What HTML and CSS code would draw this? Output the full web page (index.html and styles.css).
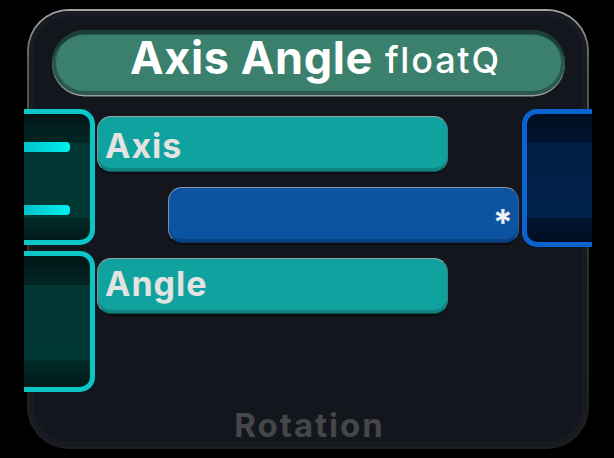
FILE: index.html
```html
<!DOCTYPE html>
<html>
<head>
<meta charset="utf-8">
<link rel="stylesheet" href="styles.css">
</head>
<body>
<div class="node">
  <div class="node-inner">
    <div class="title">
      <span class="name">Axis Angle</span>
      <span class="type">floatQ</span>
    </div>
    <div class="rows">
      <div class="field teal">Axis</div>
      <div class="field blue">*</div>
      <div class="field teal high">Angle</div>
    </div>
    <div class="footer">Rotation</div>
  </div>
  <div class="socket in s1">
    <span class="bar"></span>
    <span class="bar"></span>
  </div>
  <div class="socket in s2"></div>
  <div class="socket out s3"></div>
</div>
</body>
</html>
```

FILE: styles.css
```css
html, body {
  margin: 0;
  background: #000;
}
body {
  width: 614px;
  height: 458px;
  overflow: hidden;
  padding: 9px 0 0 27px;
  box-sizing: border-box;
  font-family: Inter, "Noto Sans", sans-serif;
}
.node {
  position: relative;
  width: 562px;
  height: 440px;
  box-sizing: border-box;
  padding: 2px;
  border-radius: 42px;
  background: linear-gradient(to bottom, #a6a6a6 0%, #5a5a5a 12%, #2c2c2c 60%, #202020 100%);
}
.node-inner {
  height: 100%;
  box-sizing: border-box;
  border-radius: 40px;
  background: #13161d;
  box-shadow: inset 0 0 0 5px #181b21;
  padding: 19px 22px 0 23px;
  display: flex;
  flex-direction: column;
}
.title {
  height: 65px;
  box-sizing: border-box;
  border-radius: 33px;
  background: #3a806d;
  box-shadow: inset 0 5px 0 rgba(0, 0, 0, 0.3), inset 0 0 0 4px rgba(0, 0, 0, 0.3), 0 1.5px 0 #9a9d9d;
  display: flex;
  align-items: center;
  justify-content: center;
  gap: 12px;
  padding: 0 0 10px 14px;
  color: #fff;
}
.name {
  font-size: 45px;
  font-weight: 700;
  letter-spacing: 0.6px;
  line-height: 1;
}
.type {
  font-size: 36px;
  font-weight: 500;
  letter-spacing: 1.8px;
  line-height: 1;
  padding-top: 5px;
}
.rows {
  margin-top: 21px;
  display: flex;
  flex-direction: column;
  gap: 15px;
  padding-left: 45px;
}
.field {
  width: 351px;
  height: 56px;
  box-sizing: border-box;
  border-radius: 14px;
  border: 1.5px solid;
  font-size: 34px;
  font-weight: 700;
  color: #e3e3e3;
  display: flex;
  align-items: center;
  padding: 3px 0 0 7px;
  letter-spacing: 1px;
}
.field.high {
  padding-top: 0;
  padding-bottom: 6px;
}
.teal {
  background: #10a29e;
  border-color: #8ea7a5 #3f7f7c #0c5553 #7d9a98;
  box-shadow: inset 0 -3px 0 rgba(0, 0, 0, 0.18), 0 2px 0 #0b0d12;
}
.blue {
  margin-left: 71px;
  background: #0c53a2;
  border-color: #8595ad #3d6294 #0a3466 #7e8fa8;
  box-shadow: inset 0 -3px 0 rgba(0, 0, 0, 0.2), 0 2px 0 #0b0d12;
  justify-content: flex-end;
  padding: 14px 5px 0 0;
  font-size: 36px;
  letter-spacing: 0;
  color: #f0f2f6;
}
.footer {
  margin-top: auto;
  padding-bottom: 5px;
  text-align: center;
  font-size: 33px;
  line-height: 33px;
  font-weight: 700;
  letter-spacing: 2px;
  color: #454647;
  padding-left: 2px;
}
.socket {
  position: absolute;
  box-sizing: border-box;
  width: 71px;
}
.socket.in {
  left: -3px;
  border: 5px solid #0ac6c6;
  border-left: none;
  border-radius: 0 15px 15px 0;
  background: linear-gradient(to bottom, #001615 0, #002725 29px, #003634 29px, #003836 104px, #002b29 104px, #001a19 100%);
}
.s1 {
  top: 100px;
  height: 136px;
  display: flex;
  flex-direction: column;
  gap: 53px;
  padding-top: 28px;
}
.s2 {
  top: 242px;
  height: 141px;
}
.bar {
  display: block;
  width: 46px;
  height: 10px;
  border-radius: 0 4px 4px 0;
  background: linear-gradient(to right, #00c2c8, #00f0f0);
}
.socket.out {
  left: 495px;
  top: 100px;
  width: 70px;
  height: 138px;
  border: 5px solid #0a64d0;
  border-right: none;
  border-radius: 15px 0 0 15px;
  background: linear-gradient(to bottom, #000d22 0, #00132e 29px, #001f44 29px, #00214a 104px, #00152f 104px, #000e22 100%);
}
```
